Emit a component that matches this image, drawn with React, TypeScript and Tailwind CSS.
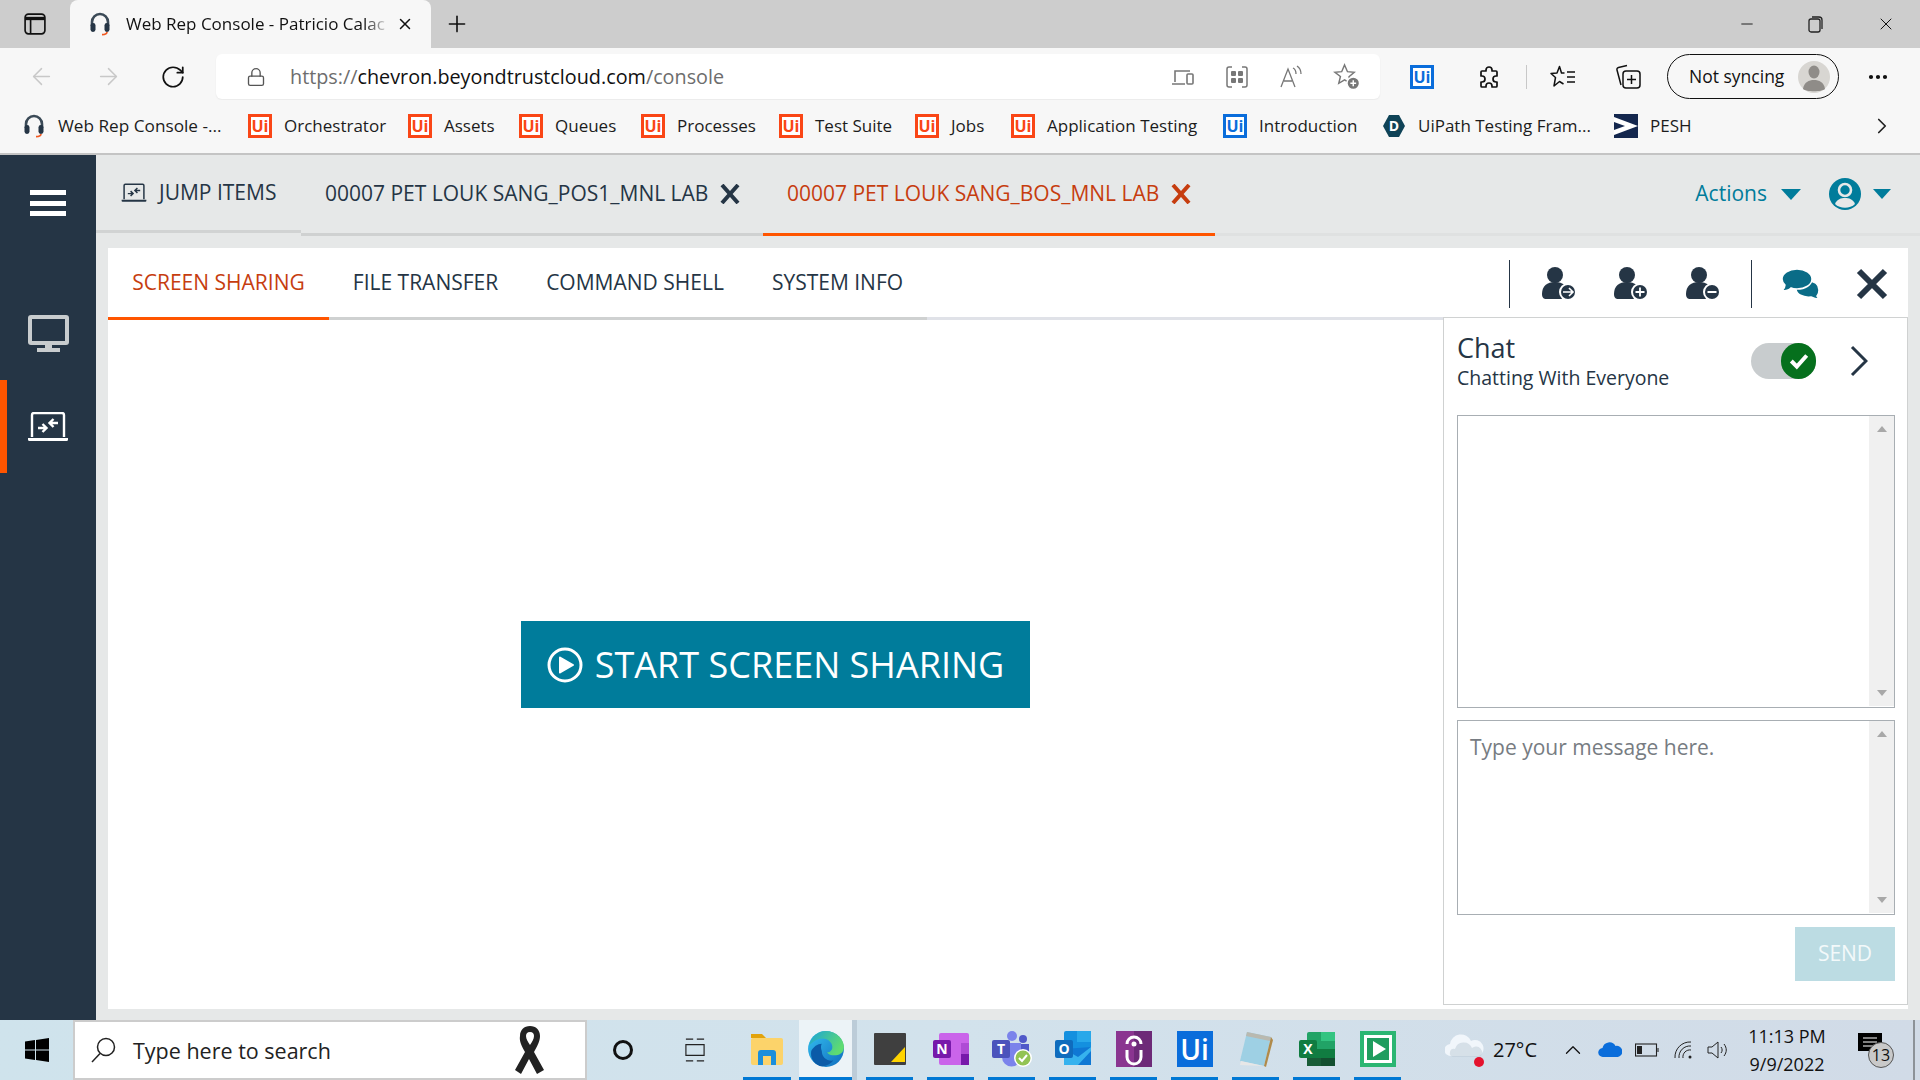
import React from 'react';
import { ArrowLeft, ArrowRight, RotateCw, Lock, Plus, X, Minus, ChevronRight, ChevronUp, Ellipsis } from 'lucide-react';

function Headset({ className }: { className: string }) {
  return (
    <svg viewBox="0 0 24 24" className={className} fill="none">
      <path d="M4 14V10a8 8 0 0 1 16 0v4" stroke="#3b4a57" strokeWidth="2.6" />
      <rect x="2.5" y="11" width="5" height="9" rx="2.4" fill="#253545" />
      <rect x="16.5" y="11" width="5" height="9" rx="2.4" fill="#253545" />
      <path d="M19 20c0 2-2 2.6-5 2.6" stroke="#f15a22" strokeWidth="1.6" />
    </svg>
  );
}

function UiLogo({ blue = false }: { blue?: boolean }) {
  return (
    <span
      className={`flex h-[24px] w-[24px] shrink-0 items-center justify-center border-[3px] bg-white text-[16px] font-bold leading-none ${
        blue ? 'border-[#0a6ddb] text-[#0a6ddb]' : 'border-[#fa4616] text-[#fa4616]'
      }`}
    >
      Ui
    </span>
  );
}

const bookmarks = [
  { label: 'Orchestrator', w: 'w-[160px]' },
  { label: 'Assets', w: 'w-[111px]' },
  { label: 'Queues', w: 'w-[122px]' },
  { label: 'Processes', w: 'w-[138px]' },
  { label: 'Test Suite', w: 'w-[136px]' },
  { label: 'Jobs', w: 'w-[96px]' },
  { label: 'Application Testing', w: 'w-[212px]' },
];

function BookmarksBar() {
  return (
    <div className="flex h-[55px] items-center border-b-2 border-[#c4c4c4] bg-[#f7f7f7] pb-[1px] pl-[22px] text-[17px] text-[#1c1c1c]">
      <div className="flex w-[226px] items-center gap-[12px]">
        <Headset className="h-[24px] w-[24px]" />
        <span className="text-[17.2px]">Web Rep Console -...</span>
      </div>
      {bookmarks.map(b => (
        <div key={b.label} className={`flex items-center gap-[12px] ${b.w}`}>
          <UiLogo />
          <span>{b.label}</span>
        </div>
      ))}
      <div className="flex w-[159px] items-center gap-[12px]">
        <UiLogo blue />
        <span>Introduction</span>
      </div>
      <div className="flex w-[232px] items-center gap-[12px]">
        <svg viewBox="0 0 24 24" className="h-[24px] w-[24px]">
          <path d="M7 1h10l6 11-6 11H7L1 12z" fill="#0f4357" />
          <text x="12" y="17" textAnchor="middle" fontSize="14" fontWeight="700" fill="#fff">D</text>
        </svg>
        <span>UiPath Testing Fram...</span>
      </div>
      <div className="flex items-center gap-[12px]">
        <svg viewBox="0 0 24 24" className="h-[24px] w-[24px]">
          <rect width="24" height="24" fill="#14274e" />
          <path d="M0 3l24 9L0 21v-5l11-4L0 8z" fill="#fff" />
        </svg>
        <span>PESH</span>
      </div>
      <ChevronRight className="ml-auto mr-[25px] h-[26px] w-[26px] text-[#222]" strokeWidth={1.6} />
    </div>
  );
}

function TabStrip() {
  return (
    <div className="flex h-[48px] items-end bg-[#cdcdcd] text-[#111]">
      <div className="flex h-[48px] w-[70px] items-center justify-center">
        <svg viewBox="0 0 20 20" className="h-[22px] w-[22px]" fill="none" stroke="#111" strokeWidth="1.5">
          <rect x="1" y="1" width="18" height="18" rx="3" />
          <path d="M1 5h18" strokeWidth="3" />
          <path d="M6 5v14" />
        </svg>
      </div>
      <div className="flex h-[48px] w-[361px] items-center rounded-t-[8px] bg-[#f7f7f7] pl-[18px] text-[17px]">
        <Headset className="h-[24px] w-[24px] shrink-0" />
        <span className="ml-[14px] w-[264px] overflow-hidden whitespace-nowrap [mask-image:linear-gradient(to_right,black_90%,transparent)]">
          Web Rep Console - Patricio Calac
        </span>
        <X className="ml-[6px] h-[18px] w-[18px]" strokeWidth={2} />
      </div>
      <div className="flex h-[48px] items-center pl-[13px]">
        <Plus className="h-[26px] w-[26px]" strokeWidth={1.5} />
      </div>
      <div className="ml-auto flex h-[48px] items-center gap-[51px] pr-[24px]">
        <Minus className="h-[18px] w-[18px]" strokeWidth={1.2} />
        <svg viewBox="0 0 18 18" className="h-[18px] w-[18px]" fill="none" stroke="#222" strokeWidth="1.3">
          <rect x="2" y="4" width="11" height="13" rx="2" />
          <path d="M5 2h7a3 3 0 0 1 3 3v9" />
        </svg>
        <X className="h-[20px] w-[20px]" strokeWidth={1.2} />
      </div>
    </div>
  );
}

function AddressBar() {
  return (
    <div className="flex h-[52px] items-start bg-[#f7f7f7] pt-[6px]">
      <div className="flex h-[45px] w-[216px] items-center pl-[28px]">
        <ArrowLeft className="h-[27px] w-[27px] text-[#c8c8c8]" strokeWidth={1.3} />
        <ArrowRight className="ml-[40px] h-[27px] w-[27px] text-[#c8c8c8]" strokeWidth={1.3} />
        <RotateCw className="ml-[38px] h-[26px] w-[26px] text-[#111]" strokeWidth={1.6} />
      </div>
      <div className="flex h-[45px] w-[1164px] items-center rounded-[6px] bg-white pl-[30px] shadow-[0_1px_2px_rgba(0,0,0,0.06)]">
        <Lock className="h-[22px] w-[20px] text-[#555]" strokeWidth={1.6} />
        <span className="ml-[24px] text-[19.8px] text-[#6d6d6d]">
          https://<span className="text-[#111]">chevron.beyondtrustcloud.com</span>/console
        </span>
        <div className="ml-auto flex items-center gap-[30px] pr-[20px] text-[#777]">
          <svg viewBox="0 0 24 24" className="h-[24px] w-[24px]" fill="none" stroke="currentColor" strokeWidth="1.6">
            <path d="M4 17V6h15M1 19h13" />
            <rect x="16" y="9" width="6" height="10" rx="1" />
          </svg>
          <svg viewBox="0 0 24 24" className="h-[24px] w-[24px]" fill="none" stroke="currentColor" strokeWidth="1.5">
            <path d="M7 2H4a2 2 0 0 0-2 2v16a2 2 0 0 0 2 2h3M17 2h3a2 2 0 0 1 2 2v16a2 2 0 0 1-2 2h-3" />
            <g fill="currentColor" stroke="none">
              <rect x="6" y="6" width="5" height="5" rx="1" />
              <rect x="13" y="6" width="5" height="5" rx="1" />
              <rect x="6" y="13" width="5" height="5" rx="1" />
              <rect x="13" y="13" width="5" height="5" rx="1" />
            </g>
          </svg>
          <svg viewBox="0 0 24 24" className="h-[24px] w-[24px]" fill="none" stroke="currentColor" strokeWidth="1.3">
            <path d="M2 22L9 4l7 18M5 16h8" />
            <path d="M14 3c2 1 3 3 3 6M18 1c3 2 4 5 4 8" />
          </svg>
          <svg viewBox="0 0 28 28" className="h-[27px] w-[27px]" fill="none" stroke="currentColor" strokeWidth="1.5">
            <path d="M12 2l3 7 7 .6-5.4 4.6 1.6 7-6.200-3.700L6 21l1.700-7L2 9.600 9 9z" />
            <circle cx="21" cy="21" r="6.500" fill="#777" stroke="#fff" />
            <path d="M21 18v6M18 21h6" stroke="#fff" />
          </svg>
        </div>
      </div>
      <div className="flex h-[45px] items-center">
        <span className="ml-[30px]"><UiLogo blue /></span>
        <svg viewBox="0 0 24 24" className="ml-[43px] h-[26px] w-[24px]" fill="none" stroke="#111" strokeWidth="1.7" strokeLinejoin="round">
          <path d="M9 5a3 3 0 0 1 6 0v1h4a1 1 0 0 1 1 1v4h-1a3 3 0 0 0 0 6h1v4a1 1 0 0 1-1 1h-4v-1a3 3 0 0 0-6 0v1H5a1 1 0 0 1-1-1v-4h1a3 3 0 0 0 0-6H4V7a1 1 0 0 1 1-1h4z" />
        </svg>
        <span className="ml-[25px] h-[24px] w-px bg-[#c8c8c8]" />
        <svg viewBox="0 0 26 26" className="ml-[23px] h-[26px] w-[26px]" fill="none" stroke="#111" strokeWidth="1.5" strokeLinejoin="round">
          <path d="M14.500 9h-3L9.500 2.500 7 9l-6 .5 4.500 4L4 22l5.500-4.500 4 2.500" />
          <path d="M17 8h8M17 13h8M17 18h8" />
        </svg>
        <svg viewBox="0 0 26 26" className="ml-[39px] h-[26px] w-[26px]" fill="none" stroke="#111" strokeWidth="1.5">
          <path d="M6 21L2 6a2 2 0 0 1 1.500-2.500L12 1.500" />
          <rect x="8" y="7" width="17" height="17" rx="3" />
          <path d="M16.500 11v9M12 15.500h9" />
        </svg>
        <div className="ml-[26px] flex h-[45px] w-[172px] items-center rounded-full border-[1.5px] border-[#111] pl-[21px] text-[17.5px] text-[#111]">
          Not syncing
          <svg viewBox="0 0 32 32" className="ml-[14px] h-[32px] w-[32px]">
            <circle cx="16" cy="16" r="16" fill="#d8d6d2" />
            <ellipse cx="16" cy="11" rx="5.500" ry="6.500" fill="#8f8c88" />
            <path d="M5 28c1-7 6-9 11-9s10 2 11 9c-3 3-19 3-22 0z" fill="#8f8c88" />
          </svg>
        </div>
        <Ellipsis className="ml-[27px] h-[24px] w-[24px] text-[#111]" strokeWidth={2.2} />
      </div>
    </div>
  );
}

function LaptopSwap({ className }: { className: string }) {
  return (
    <svg viewBox="0 0 42 30" className={className} fill="none" stroke="currentColor" strokeWidth="2.400">
      <path d="M5 25V3a2 2 0 0 1 2-2h28a2 2 0 0 1 2 2v22" />
      <path d="M1 26h40v1.500a1.500 1.500 0 0 1-1.500 1.500h-37A1.500 1.500 0 0 1 1 27.500z" fill="currentColor" stroke="none" />
      <path d="M11 16h8M15.500 12l4 4-4 4M31 11h-8M26.500 7l-4 4 4 4" />
    </svg>
  );
}

function Sidebar() {
  return (
    <div className="flex w-[96px] shrink-0 flex-col bg-[#253545]">
      <div className="flex h-[160px] flex-col items-center gap-[5.500px] pt-[35px]">
        <span className="h-[5px] w-[36px] bg-white" />
        <span className="h-[5px] w-[36px] bg-white" />
        <span className="h-[5px] w-[36px] bg-white" />
      </div>
      <div className="flex h-[65px] items-start justify-center">
        <svg viewBox="0 0 41 37" className="h-[37px] w-[41px]">
          <path d="M3 0h35a3 3 0 0 1 3 3v24a3 3 0 0 1-3 3H3a3 3 0 0 1-3-3V3a3 3 0 0 1 3-3z" fill="#c8ccce" />
          <rect x="4" y="4" width="33" height="22" fill="#253545" />
          <path d="M17 30h7v3h-7zM9 33h23v4H9z" fill="#c8ccce" />
        </svg>
      </div>
      <div className="flex h-[93px] items-center justify-center border-l-[7px] border-[#ff5500] pr-[7px] text-white">
        <LaptopSwap className="h-[30px] w-[42px]" />
      </div>
    </div>
  );
}

function TabClose() {
  return (
    <svg viewBox="0 0 20 20" className="ml-[12px] h-[20px] w-[20px]" fill="none" stroke="currentColor" strokeWidth="4">
      <path d="M2 1l16 18M18 1L2 19" />
    </svg>
  );
}

function HeaderTabs() {
  return (
    <div className="flex h-[81px] shrink-0 bg-[#e6e8e8] text-[21px] text-[#253545]">
      <div className="flex h-[78px] w-[205px] items-center gap-[12px] border-b-[3px] border-[#d1d3d3] pl-[25px] pt-[1px]">
        <LaptopSwap className="h-[20px] w-[26px]" />
        <span>JUMP ITEMS</span>
      </div>
      <div className="flex h-[81px] w-[462px] items-center border-b-[3px] border-[#cfd1d1] pl-[24px]">
        <span className="whitespace-nowrap">00007 PET LOUK SANG_POS1_MNL LAB</span>
        <TabClose />
      </div>
      <div className="flex h-[81px] w-[452px] items-center border-b-[3px] border-[#ff5500] pl-[24px] text-[#c63d0f]">
        <span className="whitespace-nowrap">00007 PET LOUK SANG_BOS_MNL LAB</span>
        <TabClose />
      </div>
      <div className="flex h-[81px] flex-1 items-center border-b-[3px] border-[#dfe1e1]">
        <span className="ml-auto text-[#007c9b]">Actions</span>
        <span className="ml-[14px] h-0 w-0 border-x-[10px] border-t-[11px] border-x-transparent border-t-[#007c9b]" />
        <svg viewBox="0 0 32 32" className="ml-[28px] h-[32px] w-[32px]">
          <circle cx="16" cy="16" r="16" fill="#007c9b" />
          <circle cx="16" cy="12" r="6" fill="none" stroke="#e6e8e8" strokeWidth="2.600" />
          <path d="M6 26c2-5 6-6 10-6s8 1 10 6c-5 5-15 5-20 0z" fill="#e6e8e8" />
        </svg>
        <span className="ml-[12px] mr-[29px] h-0 w-0 border-x-[9px] border-t-[10px] border-x-transparent border-t-[#007c9b]" />
      </div>
    </div>
  );
}

function UserBadge({ kind }: { kind: 'arrow' | 'plus' | 'minus' }) {
  return (
    <svg viewBox="0 0 36 36" className="h-[36px] w-[36px]">
      <circle cx="14" cy="9" r="8" fill="#253545" />
      <path d="M1 28c0-8 5-12 13-12s13 4 13 12c0 4-2 5-4 5H5c-2 0-4-1-4-5z" fill="#253545" />
      <circle cx="27" cy="26" r="9" fill="#fff" />
      <circle cx="27" cy="26" r="7" fill="#253545" />
      {kind === 'arrow' && <path d="M22 26h9M28 22l4 4-4 4" stroke="#fff" strokeWidth="1.600" fill="none" />}
      {kind === 'plus' && <path d="M27 21.500v9M22.500 26h9" stroke="#fff" strokeWidth="1.800" />}
      {kind === 'minus' && <path d="M22.500 26h9" stroke="#fff" strokeWidth="2" />}
    </svg>
  );
}

function SessionToolbar() {
  return (
    <div className="flex h-[70px] w-[465px] items-center border-b border-[#d0d2d2] pt-[2px]">
      <span className="ml-[66px] h-[48px] w-px bg-[#253545]" />
      <span className="ml-[31px]"><UserBadge kind="arrow" /></span>
      <span className="ml-[36px]"><UserBadge kind="plus" /></span>
      <span className="ml-[36px]"><UserBadge kind="minus" /></span>
      <span className="ml-[30px] h-[48px] w-px bg-[#253545]" />
      <svg viewBox="0 0 40 32" className="ml-[29px] h-[32px] w-[40px]">
        <path d="M26 13c7 0 12 3 12 9 0 3-1 5-2 6l2 3c-3 0-6-1-8-2-8 1-15-3-15-8s5-8 11-8z" fill="#0a6c87" stroke="#fff" strokeWidth="1.500" />
        <path d="M16 1c8 0 15 4 15 10s-7 10-15 10c-2 0-4 0-6-1-2 2-5 3-9 3 2-2 3-4 3-6-2-2-3-4-3-6C1 5 8 1 16 1z" fill="#0a6c87" stroke="#fff" strokeWidth="1.500" />
      </svg>
      <svg viewBox="0 0 32 32" className="ml-[35px] h-[32px] w-[32px]">
        <path d="M3 3l26 26M29 3L3 29" stroke="#253545" strokeWidth="6" />
      </svg>
    </div>
  );
}

function ScrollGutter() {
  return (
    <div className="flex w-[25px] shrink-0 flex-col items-center justify-between bg-[#f0f0f0] py-[10px]">
      <span className="h-0 w-0 border-x-[5.500px] border-b-[6px] border-x-transparent border-b-[#a8a8a8]" />
      <span className="h-0 w-0 border-x-[5.500px] border-t-[6px] border-x-transparent border-t-[#a8a8a8]" />
    </div>
  );
}

function ChatPanel() {
  return (
    <div className="mb-[4px] ml-auto -mt-[2px] flex w-[465px] flex-col border-x border-b border-[#cfd1d1] pl-[13px] text-[#253545]">
      <div className="flex h-[97px] shrink-0 items-start">
        <div className="w-[294px] pt-[14px]">
          <div className="text-[27px] leading-[32px]">Chat</div>
          <div className="text-[19.5px] leading-[28px]">Chatting With Everyone</div>
        </div>
        <div className="relative mt-[25px] h-[36px] w-[65px] rounded-full bg-[#c8ccce]">
          <div className="absolute right-0 top-0 flex h-[36px] w-[35px] items-center justify-center rounded-full bg-[#06701d]">
            <svg viewBox="0 0 20 20" className="h-[22px] w-[22px]" fill="none" stroke="#fff" strokeWidth="3.600">
              <path d="M3 10l5 5 9-10" />
            </svg>
          </div>
        </div>
        <svg viewBox="0 0 18 32" className="ml-[34px] mt-[27px] h-[32px] w-[18px]" fill="none" stroke="#253545" strokeWidth="3">
          <path d="M2 2l14 14L2 30" />
        </svg>
      </div>
      <div className="flex h-[293px] w-[438px] shrink-0 justify-end border border-[#a8aeb3] pb-[1px]">
        <ScrollGutter />
      </div>
      <div className="mt-[12px] flex h-[195px] w-[438px] shrink-0 justify-between border border-[#a8aeb3] pb-[1px]">
        <span className="pl-[12px] pt-[12px] text-[21px] leading-[28px] text-[#777c82]">Type your message here.</span>
        <ScrollGutter />
      </div>
      <div className="mt-[12px] ml-[338px] flex h-[54px] w-[100px] items-center justify-center self-start bg-[#bcdce3] text-[21px] text-[#f3f9fa]">
        SEND
      </div>
    </div>
  );
}

function SessionCard() {
  const tabs = [
    { label: 'FILE TRANSFER', w: 'w-[193px]' },
    { label: 'COMMAND SHELL', w: 'w-[226px]' },
    { label: 'SYSTEM INFO', w: 'w-[179px]' },
  ];
  return (
    <div className="ml-[12px] mt-[12px] flex h-[761px] w-[1800px] flex-col bg-white text-[21px] text-[#253545]">
      <div className="flex h-[72px] shrink-0 items-start">
        <div className="flex h-[72px] w-[221px] items-center justify-center border-b-[3px] border-[#ff5500] text-[#c63d0f]">
          SCREEN SHARING
        </div>
        {tabs.map(t => (
          <div key={t.label} className={`flex h-[72px] items-center justify-center border-b-[3px] border-[#cfd1d1] ${t.w}`}>
            {t.label}
          </div>
        ))}
        <div className="h-[72px] w-[516px] border-b-[3px] border-[#e0e2e8]" />
        <SessionToolbar />
      </div>
      <div className="flex min-h-0 flex-1">
        <div className="flex flex-1 items-center justify-center">
          <button className="flex h-[87px] w-[509px] items-center justify-center gap-[12px] bg-[#007c9b] text-[36px] text-white">
            <svg viewBox="0 0 36 36" className="h-[36px] w-[36px]" fill="none" stroke="#fff" strokeWidth="3">
              <circle cx="18" cy="18" r="16" />
              <path d="M13 10.500l13 7.500-13 7.500z" fill="#fff" strokeLinejoin="round" strokeWidth="2" />
            </svg>
            START SCREEN SHARING
          </button>
        </div>
        <ChatPanel />
      </div>
    </div>
  );
}

function EdgeIcon() {
  return (
    <svg viewBox="0 0 36 36" className="h-[38px] w-[38px]">
      <defs>
        <linearGradient id="edgeA" x1="0" y1="0" x2="1" y2="1">
          <stop offset="0" stopColor="#35c1f1" />
          <stop offset="1" stopColor="#0f6cbd" />
        </linearGradient>
        <linearGradient id="edgeB" x1="0" y1="0" x2="1" y2="0.500">
          <stop offset="0" stopColor="#1ba3d8" />
          <stop offset="1" stopColor="#5fdc70" />
        </linearGradient>
      </defs>
      <circle cx="18" cy="18" r="17" fill="url(#edgeA)" />
      <path d="M2 15C4 5 11 1 18 1c10 0 17 8 17 15 0 6-5 8-9 8-3 0-6-1-7-3 3 0 5-2 5-5 0-4-4-8-9-8-5 0-10 3-13 7z" fill="url(#edgeB)" />
      <path d="M14 20c0 6 5 10 11 9-3 4-8 6-13 5C6 32 3 26 4 20c2-4 6-7 10-7-1 2-1 4 0 7z" fill="#0b5ba8" />
    </svg>
  );
}

function TaskIcon({ id }: { id: string }) {
  switch (id) {
    case 'explorer':
      return (
        <svg viewBox="0 0 34 36" className="h-[36px] w-[34px]">
          <path d="M1 3h11l4 4H1z" fill="#e2a30c" />
          <rect x="1" y="7" width="32" height="27" rx="2" fill="#fcd36a" />
          <path d="M8 34V22a3 3 0 0 1 3-3h12a3 3 0 0 1 3 3v12h-5v-9h-8v9z" fill="#1b8fdc" />
        </svg>
      );
    case 'sticky':
      return (
        <svg viewBox="0 0 32 32" className="h-[32px] w-[32px]">
          <rect width="32" height="32" rx="1" fill="#3f3f3f" />
          <path d="M31 14v15H17z" fill="#ffd400" />
        </svg>
      );
    case 'onenote':
      return (
        <svg viewBox="0 0 36 32" className="h-[32px] w-[36px]">
          <rect x="6" width="30" height="32" rx="2" fill="#ca64ea" />
          <rect x="28" y="10" width="8" height="11" fill="#ae4bd5" />
          <rect x="28" y="21" width="8" height="11" fill="#7719aa" />
          <rect y="7" width="18" height="18" rx="2" fill="#7719aa" />
          <text x="9" y="21" textAnchor="middle" fontSize="14" fontWeight="700" fill="#fff">N</text>
        </svg>
      );
    case 'teams':
      return (
        <svg viewBox="0 0 40 36" className="h-[36px] w-[40px]">
          <circle cx="20" cy="5" r="5" fill="#7b83eb" />
          <circle cx="31" cy="8" r="4" fill="#5059c9" />
          <path d="M25 13h12v11a6 6 0 0 1-12 0z" fill="#5059c9" />
          <path d="M10 12h19v14a9 9 0 0 1-19 0z" fill="#7b83eb" />
          <rect y="9" width="18" height="18" rx="2" fill="#4b53bc" />
          <text x="9" y="23" textAnchor="middle" fontSize="14" fontWeight="700" fill="#fff">T</text>
          <circle cx="31" cy="27" r="9" fill="#fff" />
          <circle cx="31" cy="27" r="7.500" fill="#92c353" />
          <path d="M27 27l3 3 5-6" fill="none" stroke="#fff" strokeWidth="2" />
        </svg>
      );
    case 'outlook':
      return (
        <svg viewBox="0 0 36 36" className="h-[36px] w-[36px]">
          <rect x="9" width="27" height="34" rx="2" fill="#1490df" />
          <rect x="22" width="14" height="11" fill="#28a8ea" />
          <path d="M9 18l27-2v18H9z" fill="#0f78d4" />
          <path d="M9 18l14 8 13-10v4L23 34H9z" fill="#50d9ff" opacity="0.600" />
          <rect y="9" width="18" height="18" rx="2" fill="#0f6cbd" />
          <text x="9" y="23" textAnchor="middle" fontSize="14" fontWeight="700" fill="#fff">O</text>
        </svg>
      );
    case 'purple':
      return (
        <svg viewBox="0 0 36 36" className="h-[36px] w-[36px]">
          <rect width="36" height="36" fill="#8a3590" />
          <path d="M18 0h18v36H18z" fill="#6d2a78" />
          <path d="M11 13a7 7 0 0 1 14 0M11 19v7a7 7 0 0 0 14 0v-7" fill="none" stroke="#fff" strokeWidth="3" />
          <circle cx="18" cy="13" r="2.500" fill="#fff" />
        </svg>
      );
    case 'ui':
      return (
        <div className="flex h-[36px] w-[36px] items-center justify-center bg-[#0a6ddb] text-[28px] font-semibold leading-none text-white">
          Ui
        </div>
      );
    case 'notepad':
      return (
        <svg viewBox="0 0 34 36" className="h-[36px] w-[34px]">
          <path d="M8 1l24 5-7 29L1 30z" fill="#9ed0e4" />
          <path d="M8 1l24 5-1 4L7 5z" fill="#b9b9b0" />
          <path d="M32 6l2 3-7 27-2-1z" fill="#b08a4a" />
          <path d="M2 30L25 35 1 34z" fill="#e7e7e7" />
        </svg>
      );
    case 'excel':
      return (
        <svg viewBox="0 0 36 36" className="h-[36px] w-[36px]">
          <rect x="8" y="1" width="28" height="34" rx="2" fill="#21a366" />
          <rect x="22" y="1" width="14" height="9" fill="#33c481" />
          <rect x="8" y="18" width="28" height="9" fill="#107c41" />
          <rect x="8" y="27" width="14" height="8" fill="#185c37" />
          <rect x="22" y="27" width="14" height="8" fill="#134f30" />
          <rect y="9" width="18" height="18" rx="2" fill="#107c41" />
          <text x="9" y="23" textAnchor="middle" fontSize="14" fontWeight="700" fill="#fff">X</text>
        </svg>
      );
    default:
      return (
        <svg viewBox="0 0 36 36" className="h-[36px] w-[36px]">
          <rect width="36" height="36" fill="#2bb673" />
          <rect x="4" y="4" width="28" height="28" fill="#fff" />
          <rect x="7" y="7" width="22" height="22" fill="#1f9d5f" />
          <path d="M13 10l13 8-13 8z" fill="#fff" />
        </svg>
      );
  }
}

const runningApps = ['sticky', 'onenote', 'teams', 'outlook', 'purple', 'ui', 'notepad', 'excel', 'green'];

function Taskbar() {
  return (
    <div className="flex h-[60px] shrink-0 items-stretch bg-gradient-to-r from-[#cfe3ec] via-[#d2e2ec] to-[#d1dbe7] text-[#111]">
      <div className="flex w-[73px] items-center justify-center">
        <svg viewBox="0 0 24 24" className="h-[24px] w-[24px]" fill="#000">
          <path d="M0 3.500l10-1.400v9.300H0zM11 2l13-2v11.400H11zM0 12.500h10v9.400L0 20.500zM11 12.500h13V24l-13-2z" />
        </svg>
      </div>
      <div className="flex w-[514px] items-center border-[2.500px] border-[#cccccc] bg-white pl-[15px] text-[21.5px] text-[#222]">
        <svg viewBox="0 0 26 26" className="h-[26px] w-[26px]" fill="none" stroke="#222" strokeWidth="1.500">
          <circle cx="16" cy="10" r="8.500" />
          <path d="M10 16.500L2 25" />
        </svg>
        <span className="ml-[17px] pt-[2px]">Type here to search</span>
        <svg viewBox="0 0 30 48" className="ml-auto mr-[40px] h-[48px] w-[30px]">
          <path d="M15 0c6 0 10 4 10 10 0 5-3 11-6 16l10 18-7 4-8-15-8 15-6-4 10-18C7 21 4 15 5 10 5 4 9 0 15 0zm0 6c-3 0-4 2-4 4 0 3 2 6 4 9 2-3 4-6 4-9 0-2-1-4-4-4z" fill="#222" />
        </svg>
      </div>
      <div className="flex w-[72px] items-center justify-center">
        <span className="h-[20px] w-[20px] rounded-full border-[3.500px] border-[#111]" />
      </div>
      <div className="flex w-[72px] items-center justify-center">
        <svg viewBox="0 0 22 28" className="h-[26px] w-[20px]" fill="none" stroke="#222" strokeWidth="1.300">
          <path d="M1 2h8M13 2h8M1 8h20v12H1zM1 26h8M13 26h8" />
        </svg>
      </div>
      <div className="ml-[12px] flex h-full w-[48px] flex-col items-center">
        <div className="flex flex-1 items-center justify-center">
          <TaskIcon id="explorer" />
        </div>
        <span className="h-[3px] w-[48px] bg-[#0078d4]" />
      </div>
      <div className="ml-[8px] flex h-full w-[53px] flex-col items-center bg-[#ecf3f7]">
        <div className="flex flex-1 items-center justify-center">
          <EdgeIcon />
        </div>
        <span className="h-[3px] w-[53px] bg-[#0078d4]" />
      </div>
      <span className="h-full w-[5px] bg-[#bcccd8]" />
      <div className="ml-[9px] flex gap-[14px]">
        {runningApps.map(id => (
          <div key={id} className="flex h-full w-[47px] flex-col items-center">
            <div className="flex flex-1 items-center justify-center">
              <TaskIcon id={id} />
            </div>
            <span className="h-[3px] w-[47px] bg-[#0078d4]" />
          </div>
        ))}
      </div>
      <div className="ml-auto flex items-center">
        <svg viewBox="0 0 40 36" className="h-[36px] w-[40px]">
          <path d="M6 24a6 6 0 0 1-1-12 11 11 0 0 1 21-3 8 8 0 0 1 8 15z" fill="#f1f6fb" />
          <path d="M8 25a4 4 0 0 1 2-8 9 9 0 0 1 17-1 5 5 0 0 1 8 9z" fill="#bccad6" opacity="0.500" />
          <circle cx="34" cy="30" r="5" fill="#e4122d" />
        </svg>
        <span className="ml-[8px] text-[20px]">27°C</span>
        <ChevronUp className="ml-[23px] h-[26px] w-[26px]" strokeWidth={1.2} />
        <svg viewBox="0 0 24 16" className="ml-[12px] h-[16px] w-[24px]">
          <path d="M5 15a4.500 4.500 0 0 1-.5-9 7 7 0 0 1 13-2 5 5 0 0 1 2.500 11z" fill="#0a6ddb" />
        </svg>
        <svg viewBox="0 0 24 14" className="ml-[13px] h-[14px] w-[24px]" fill="none" stroke="#222" strokeWidth="1.100">
          <rect x="0.500" y="1" width="21" height="12" />
          <rect x="2" y="3" width="5" height="8" fill="#222" stroke="none" />
          <path d="M23 5v4" />
        </svg>
        <svg viewBox="0 0 20 18" className="ml-[15px] h-[18px] w-[20px]" fill="none" stroke="#222" strokeWidth="1">
          <path d="M1 17A15 15 0 0 1 17 1M5 17A11 11 0 0 1 17 5M9 17A7 7 0 0 1 17 9" />
          <circle cx="16" cy="16" r="1.500" fill="#222" stroke="none" />
        </svg>
        <svg viewBox="0 0 24 20" className="ml-[13px] h-[20px] w-[24px]" fill="none" stroke="#222" strokeWidth="1">
          <path d="M1 7h4l6-5v16l-6-5H1zM14 7c1.500 2 1.500 4 0 6M17 4c3 4 3 8 0 12" />
        </svg>
        <div className="ml-[18px] flex w-[76px] flex-col items-center text-[18px] leading-[28px]">
          <span className="whitespace-nowrap">11:13 PM</span>
          <span>9/9/2022</span>
        </div>
        <div className="relative ml-[33px] mr-[17px] h-[34px] w-[38px]">
          <svg viewBox="0 0 24 24" className="absolute left-0 top-0 h-[24px] w-[24px]">
            <path d="M0 0h24v18h-9l-4 6v-6H0z" fill="#000" />
            <path d="M5 5h14M5 9h14M5 13h10" stroke="#fff" strokeWidth="1" />
          </svg>
          <span className="absolute left-[10px] top-[9px] flex h-[26px] w-[26px] items-center justify-center rounded-full border border-[#555] bg-[#c9c9c9] text-[16px] leading-none">
            13
          </span>
        </div>
        <span className="h-full w-[2px] bg-[#8c9298]" />
        <span className="w-[5px]" />
      </div>
    </div>
  );
}

export default function App() {
  return (
    <div className="flex h-[1080px] w-[1920px] flex-col overflow-hidden font-['Open_Sans',sans-serif]">
      <TabStrip />
      <AddressBar />
      <BookmarksBar />
      <div className="flex min-h-0 flex-1">
        <Sidebar />
        <div className="flex min-w-0 flex-1 flex-col bg-[#e6e8e8]">
          <HeaderTabs />
          <SessionCard />
        </div>
      </div>
      <Taskbar />
    </div>
  );
}
